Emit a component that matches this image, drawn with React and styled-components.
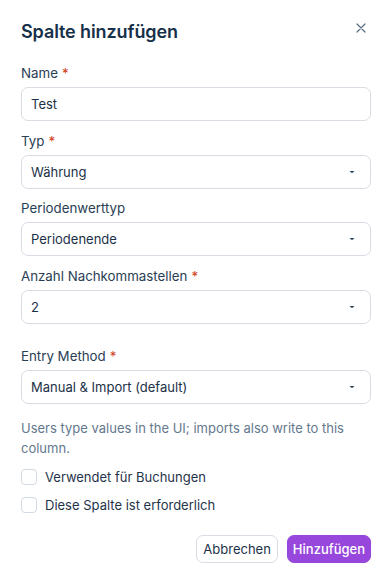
import React from "react";
import styled, { createGlobalStyle } from "styled-components";

const Global = createGlobalStyle`
  html, body { margin: 0; padding: 0; background: #fff; }
  body { font-family: Inter, "Noto Sans", sans-serif; -webkit-font-smoothing: antialiased; }
  * { box-sizing: border-box; }
`;

const Dialog = styled.div`
  width: 389px;
  height: 577px;
  padding: 18px 18px 0 21px;
  display: flex;
  flex-direction: column;
  color: #1c3147;
`;

const Header = styled.div`
  display: flex;
  align-items: center;
  justify-content: space-between;
  height: 26px;
  margin-bottom: 20px;
`;

const Title = styled.h2`
  margin: 0;
  font-size: 18px;
  font-weight: 600;
  color: #17304a;
  letter-spacing: -0.1px;
`;

const Close = styled.button`
  border: 0;
  background: none;
  padding: 0;
  width: 16px;
  height: 16px;
  display: flex;
  align-items: center;
  justify-content: center;
  margin-top: -6px;
  margin-right: 2px;
  cursor: pointer;
`;

const Field = styled.div`
  display: flex;
  flex-direction: column;
  margin-bottom: ${(p) => p.$mb ?? 10.5}px;
`;

const Label = styled.label`
  font-size: 13.3px;
  line-height: 18px;
  color: #2a3e54;
  margin-bottom: 5px;
`;

const Req = styled.span`
  color: #d1401c;
  margin-left: 4px;
`;

const Box = styled.div`
  height: 34px;
  width: 350px;
  border: 1px solid #d8dde4;
  border-radius: 7px;
  padding: 0 14px 0 9px;
  display: flex;
  align-items: center;
  justify-content: space-between;
  font-size: 13px;
  color: #1c3147;
  background: #fff;
`;

const Help = styled.p`
  margin: 14px 0 5px;
  font-size: 13px;
  line-height: 20px;
  color: #64788e;
  width: 348px;
`;

const CheckRow = styled.label`
  display: flex;
  align-items: center;
  gap: 8px;
  height: 28px;
  font-size: 13px;
  color: #1f344a;
`;

const Check = styled.span`
  width: 16px;
  height: 16px;
  border: 1px solid #d3d9e0;
  border-radius: 4px;
  background: #fff;
`;

const Footer = styled.div`
  display: flex;
  justify-content: flex-end;
  gap: 9px;
  margin-top: 16px;
  width: 350px;
`;

const Button = styled.button`
  height: 28px;
  padding: 0 ${(p) => (p.$primary ? 5 : 6)}px;
  border-radius: 7px;
  font-family: inherit;
  font-size: 13px;
  border: 1px solid ${(p) => (p.$primary ? "#9747dc" : "#d8dde4")};
  background: ${(p) => (p.$primary ? "#9747dc" : "#fff")};
  color: ${(p) => (p.$primary ? "#fff" : "#1c3147")};
  font-weight: ${(p) => (p.$primary ? 500 : 400)};
`;

const Caret = () => (
  <svg width="8" height="6" viewBox="0 0 8 6">
    <path d="M1.5 2 L6.5 2 L4 4.2 Z" fill="#2a4259" />
  </svg>
);

const Select = ({ value }) => (
  <Box>
    <span>{value}</span>
    <Caret />
  </Box>
);

export default function App() {
  return (
    <>
      <Global />
      <Dialog>
        <Header>
          <Title>Spalte hinzufügen</Title>
          <Close aria-label="close">
            <svg width="10" height="10" viewBox="0 0 10 10">
              <path d="M1 1 L9 9 M9 1 L1 9" stroke="#5a6e84" strokeWidth="1.2" strokeLinecap="round" />
            </svg>
          </Close>
        </Header>
        <Field>
          <Label>Name<Req>*</Req></Label>
          <Box>Test</Box>
        </Field>
        <Field>
          <Label>Typ<Req>*</Req></Label>
          <Select value="Währung" />
        </Field>
        <Field>
          <Label>Periodenwerttyp</Label>
          <Select value="Periodenende" />
        </Field>
        <Field $mb={23}>
          <Label>Anzahl Nachkommastellen<Req>*</Req></Label>
          <Select value="2" />
        </Field>
        <Field $mb={0}>
          <Label>Entry Method<Req>*</Req></Label>
          <Select value="Manual & Import (default)" />
        </Field>
        <Help>Users type values in the UI; imports also write to this column.</Help>
        <CheckRow><Check />Verwendet für Buchungen</CheckRow>
        <CheckRow><Check />Diese Spalte ist erforderlich</CheckRow>
        <Footer>
          <Button>Abbrechen</Button>
          <Button $primary>Hinzufügen</Button>
        </Footer>
      </Dialog>
    </>
  );
}
